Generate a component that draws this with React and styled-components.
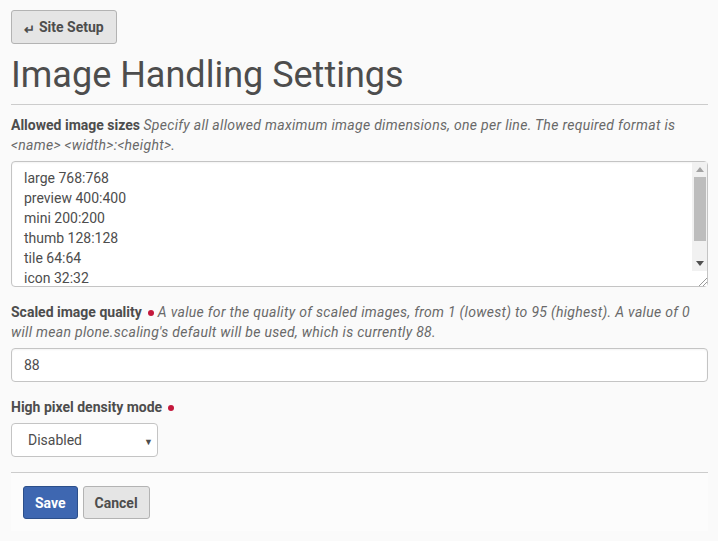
import React from 'react'
import styled, { createGlobalStyle } from 'styled-components'

const GlobalStyle = createGlobalStyle`
  html, body {
    margin: 0;
    padding: 0;
    background: #fafafa;
  }
  body {
    font-family: Roboto, "Liberation Sans", sans-serif;
    color: #4d4d4d;
    font-size: 14px;
    line-height: 20px;
  }
  * { box-sizing: border-box; }
`

const Page = styled.div`
  padding: 10px 10px 0 11px;
`

const BackButton = styled.button`
  display: inline-flex;
  align-items: center;
  gap: 4px;
  height: 34px;
  padding: 0 12px 0 12px;
  background: #e5e5e5;
  border: 1px solid #b3b3b3;
  border-radius: 3px;
  font-family: Roboto, "Liberation Sans", sans-serif;
  font-weight: 700;
  font-size: 14px;
  color: #4d4d4d;
`

const Arrow = styled.span`
  font-size: 13px;
  padding-top: 4px;
`

const Title = styled.h1`
  margin: 9px 0 0 0;
  font-size: 36px;
  line-height: 44px;
  font-weight: 400;
  color: #4d4d4d;
  padding-bottom: 7px;
  border-bottom: 1px solid #cccccc;
`

const Field = styled.div`
  margin-top: ${p => p.$top || 15}px;
`

const Label = styled.div`
  margin-bottom: 6px;
`

const LabelText = styled.span`
  font-weight: 700;
`

const Required = styled.span`
  display: inline-block;
  width: 6px;
  height: 6px;
  border-radius: 50%;
  background: #c4183c;
  margin: 0 4px 1px 6px;
  vertical-align: middle;
`

const Help = styled.span`
  font-style: italic;
  color: #696969;
  letter-spacing: 0.3px;
`

const AreaWrap = styled.div`
  position: relative;
`

const TextArea = styled.textarea`
  display: block;
  width: 100%;
  height: 126px;
  padding: 6px 12px;
  font-family: Roboto, "Liberation Sans", sans-serif;
  font-size: 14px;
  line-height: 20px;
  color: #4d4d4d;
  background: #fff;
  border: 1px solid #c4c4c4;
  border-radius: 4px;
  overflow: hidden;
  resize: none;
  box-shadow: inset 0 1px 2px rgba(0, 0, 0, 0.05);
`

/* drawn scrollbar lying over the textarea's right edge */
const ScrollBar = styled.div`
  position: absolute;
  top: 1px;
  right: 1px;
  bottom: 1px;
  width: 15px;
  display: flex;
  flex-direction: column;
  background: #f1f1f1;
  pointer-events: none;
`

const ScrollArrow = styled.div`
  height: 15px;
  display: flex;
  align-items: center;
  justify-content: center;
`

const Track = styled.div`
  flex: 1;
  padding: 0 1px 0 2px;
`

const Thumb = styled.div`
  height: 64px;
  background: #bdbdbd;
`

const Resizer = styled.div`
  height: 15px;
  background: #fff;
  display: flex;
  align-items: flex-end;
  justify-content: flex-end;
`

const ArrowIcon = ({ up }) => (
  <svg width="8" height="5" viewBox="0 0 8 5">
    <polygon points={up ? '0,5 4,0 8,5' : '0,0 8,0 4,5'} fill={up ? '#a3a3a3' : '#505050'} />
  </svg>
)

const GripIcon = () => (
  <svg width="9" height="9" viewBox="0 0 9 9">
    <line x1="1" y1="9" x2="9" y2="1" stroke="#9a9a9a" strokeWidth="1" />
    <line x1="5" y1="9" x2="9" y2="5" stroke="#9a9a9a" strokeWidth="1" />
  </svg>
)

const TextInput = styled.input`
  display: block;
  width: 100%;
  height: 34px;
  padding: 6px 12px;
  font-family: Roboto, "Liberation Sans", sans-serif;
  font-size: 14px;
  color: #4d4d4d;
  background: #fff;
  border: 1px solid #c4c4c4;
  border-radius: 4px;
  box-shadow: inset 0 1px 2px rgba(0, 0, 0, 0.05);
`

const SelectWrap = styled.div`
  position: relative;
  width: 147px;
`

const Select = styled.select`
  appearance: none;
  width: 100%;
  height: 34px;
  padding: 0 12px 0 16px;
  font-family: Roboto, "Liberation Sans", sans-serif;
  font-size: 14px;
  color: #4d4d4d;
  background: #fff;
  border: 1px solid #c4c4c4;
  border-radius: 4px;
`

const Caret = styled.span`
  position: absolute;
  right: 5px;
  top: 9px;
  font-size: 9px;
  color: #4d4d4d;
  pointer-events: none;
`

const FormButtons = styled.div`
  margin-top: 15px;
  border-top: 1px solid #cccccc;
  background: #fcfcfc;
  padding: 13px 12px 12px;
  display: flex;
  gap: 5px;
`

const Button = styled.button`
  height: 33px;
  padding: 0 11px;
  font-family: Roboto, "Liberation Sans", sans-serif;
  font-weight: 700;
  font-size: 14px;
  border-radius: 3px;
  color: ${p => (p.$primary ? '#fff' : '#4d4d4d')};
  background: ${p => (p.$primary ? '#3e67b1' : '#e5e5e5')};
  border: 1px solid ${p => (p.$primary ? '#2c4f8a' : '#b3b3b3')};
`

const sizes = [
  'large 768:768',
  'preview 400:400',
  'mini 200:200',
  'thumb 128:128',
  'tile 64:64',
  'icon 32:32',
  'listing 16:16',
].join('\n')

export default function App() {
  return (
    <Page>
      <GlobalStyle />
      <BackButton><Arrow>↵</Arrow>Site Setup</BackButton>
      <Title>Image Handling Settings</Title>

      <Field $top={10}>
        <Label>
          <LabelText>Allowed image sizes</LabelText>{' '}
          <Help>Specify all allowed maximum image dimensions, one per line. The required format is &lt;name&gt; &lt;width&gt;:&lt;height&gt;.</Help>
        </Label>
        <AreaWrap>
          <TextArea defaultValue={sizes} />
          <ScrollBar>
            <ScrollArrow><ArrowIcon up /></ScrollArrow>
            <Track><Thumb /></Track>
            <ScrollArrow><ArrowIcon /></ScrollArrow>
            <Resizer><GripIcon /></Resizer>
          </ScrollBar>
        </AreaWrap>
      </Field>

      <Field $top={15}>
        <Label>
          <LabelText>Scaled image quality</LabelText>
          <Required />
          <Help>A value for the quality of scaled images, from 1 (lowest) to 95 (highest). A value of 0 will mean plone.scaling's default will be used, which is currently 88.</Help>
        </Label>
        <TextInput defaultValue="88" />
      </Field>

      <Field $top={15}>
        <Label>
          <LabelText>High pixel density mode</LabelText>
          <Required />
        </Label>
        <SelectWrap>
          <Select defaultValue="disabled">
            <option value="disabled">Disabled</option>
            <option value="enabled">Enabled</option>
          </Select>
          <Caret>▼</Caret>
        </SelectWrap>
      </Field>

      <FormButtons>
        <Button $primary>Save</Button>
        <Button>Cancel</Button>
      </FormButtons>
    </Page>
  )
}
